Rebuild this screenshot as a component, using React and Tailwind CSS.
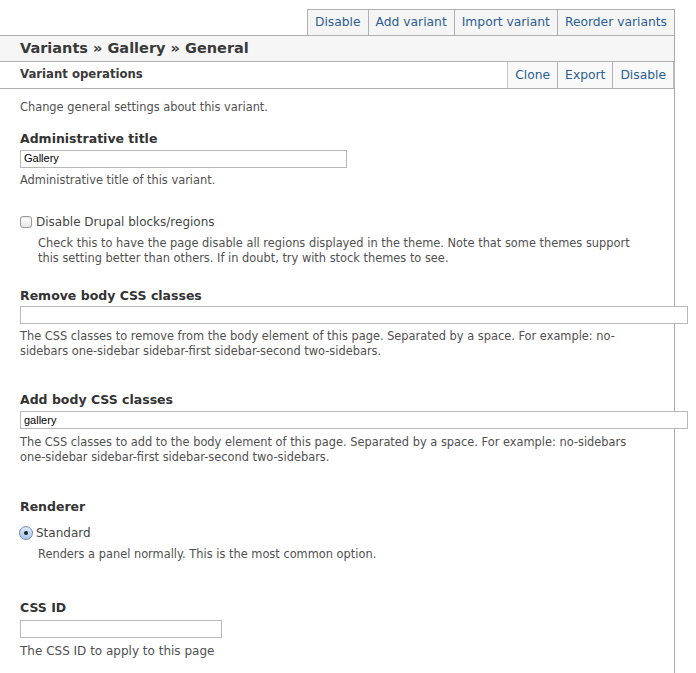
import React from "react";

function Tab({ children, last }) {
  return (
    <a className={`px-[7px] h-full flex items-center text-[#2c5e93] ${last ? "" : "border-r border-[#b0b0b0]"}`}>
      {children}
    </a>
  );
}

function Label({ children }) {
  return <div className="font-bold text-[12.5px] text-[#333] leading-[16px]">{children}</div>;
}

function Desc({ children, className = "" }) {
  return <div className={`text-[11.4px] leading-[14.5px] text-[#505050] ${className}`}>{children}</div>;
}

function TextInput({ value, w }) {
  return (
    <div className={`${w} h-[18px] border border-[#b8b8b8] bg-white flex items-center px-[3px] text-[11px] text-black font-['Liberation_Sans',sans-serif] relative z-10`}>
      {value}
    </div>
  );
}

export default function App() {
  return (
    <div className="w-[696px] h-[673px] bg-white overflow-hidden font-['DejaVu_Sans',sans-serif] text-[#555]">
      <div className="w-[675px] mt-[9px] border-r border-[#a8a8a8] pb-[40px]">
        {/* top tabs */}
        <div className="flex justify-end">
          <div className="flex h-[26px] border-t border-l border-[#b0b0b0] bg-[#f5f5f5] text-[12.3px]">
            <Tab>Disable</Tab>
            <Tab>Add variant</Tab>
            <Tab>Import variant</Tab>
            <Tab last>Reorder variants</Tab>
          </div>
        </div>
        {/* header */}
        <div className="h-[27px] bg-[#f6f6f6] border-t border-b border-[#b0b0b0] flex items-center pl-[20px]">
          <span className="font-bold text-[14.5px] text-[#3a3a3a]">Variants » Gallery » General</span>
        </div>
        {/* operations */}
        <div className="h-[27px] border-b border-[#b0b0b0] flex items-center justify-between pl-[20px]">
          <span className="font-bold text-[11.7px] text-[#3a3a3a]">Variant operations</span>
          <div className="flex h-full border-l border-[#c8c8c8] bg-[#f9f9f9] text-[12.3px] border-r-2 border-r-[#b8b8b8] -mr-[1px]">
            <Tab>Clone</Tab>
            <Tab>Export</Tab>
            <Tab last>Disable</Tab>
          </div>
        </div>

        <div className="pl-[20px]">
          <Desc className="mt-[11px]">Change general settings about this variant.</Desc>

          <div className="mt-[16px]">
            <Label>Administrative title</Label>
            <div className="mt-[3px]"><TextInput value="Gallery" w="w-[327px]" /></div>
            <Desc className="mt-[5px]">Administrative title of this variant.</Desc>
          </div>

          <div className="mt-[27px] flex items-center gap-[4px]">
            <span className="w-[12px] h-[12px] rounded-[3px] border border-[#9a9a9a] bg-gradient-to-b from-white to-[#e8e8e8] shadow-[inset_0_1px_1px_rgba(0,0,0,0.1)]" />
            <span className="text-[12px] text-[#444] leading-[16px]">Disable Drupal blocks/regions</span>
          </div>
          <Desc className="mt-[6px] ml-[18px] w-[610px]">
            Check this to have the page disable all regions displayed in the theme. Note that some themes support this setting better than others. If in doubt, try with stock themes to see.
          </Desc>

          <div className="mt-[23px]">
            <Label>Remove body CSS classes</Label>
            <div className="mt-[2px]"><TextInput value="" w="w-[668px]" /></div>
            <Desc className="mt-[5px] w-[630px]">
              The CSS classes to remove from the body element of this page. Separated by a space. For example: no-sidebars one-sidebar sidebar-first sidebar-second two-sidebars.
            </Desc>
          </div>

          <div className="mt-[34px]">
            <Label>Add body CSS classes</Label>
            <div className="mt-[3px]"><TextInput value="gallery" w="w-[668px]" /></div>
            <Desc className="mt-[6px] w-[630px]">
              The CSS classes to add to the body element of this page. Separated by a space. For example: no-sidebars one-sidebar sidebar-first sidebar-second two-sidebars.
            </Desc>
          </div>

          <div className="mt-[35px]">
            <Label>Renderer</Label>
            <div className="mt-[10px] flex items-center gap-[3px] -ml-[1px]">
              <span className="w-[14px] h-[14px] rounded-full border border-[#7a8aa8] bg-gradient-to-b from-[#dbe8f8] to-[#a9c6ee] flex items-center justify-center">
                <span className="w-[4px] h-[4px] rounded-full bg-[#222]" />
              </span>
              <span className="text-[12px] text-[#444] leading-[16px]">Standard</span>
            </div>
            <Desc className="mt-[6px] ml-[18px]">Renders a panel normally. This is the most common option.</Desc>
          </div>

          <div className="mt-[38px]">
            <Label>CSS ID</Label>
            <div className="mt-[4px]"><TextInput value="" w="w-[202px]" /></div>
            <Desc className="mt-[6px] text-[12px]">The CSS ID to apply to this page</Desc>
          </div>
        </div>
      </div>
    </div>
  );
}
